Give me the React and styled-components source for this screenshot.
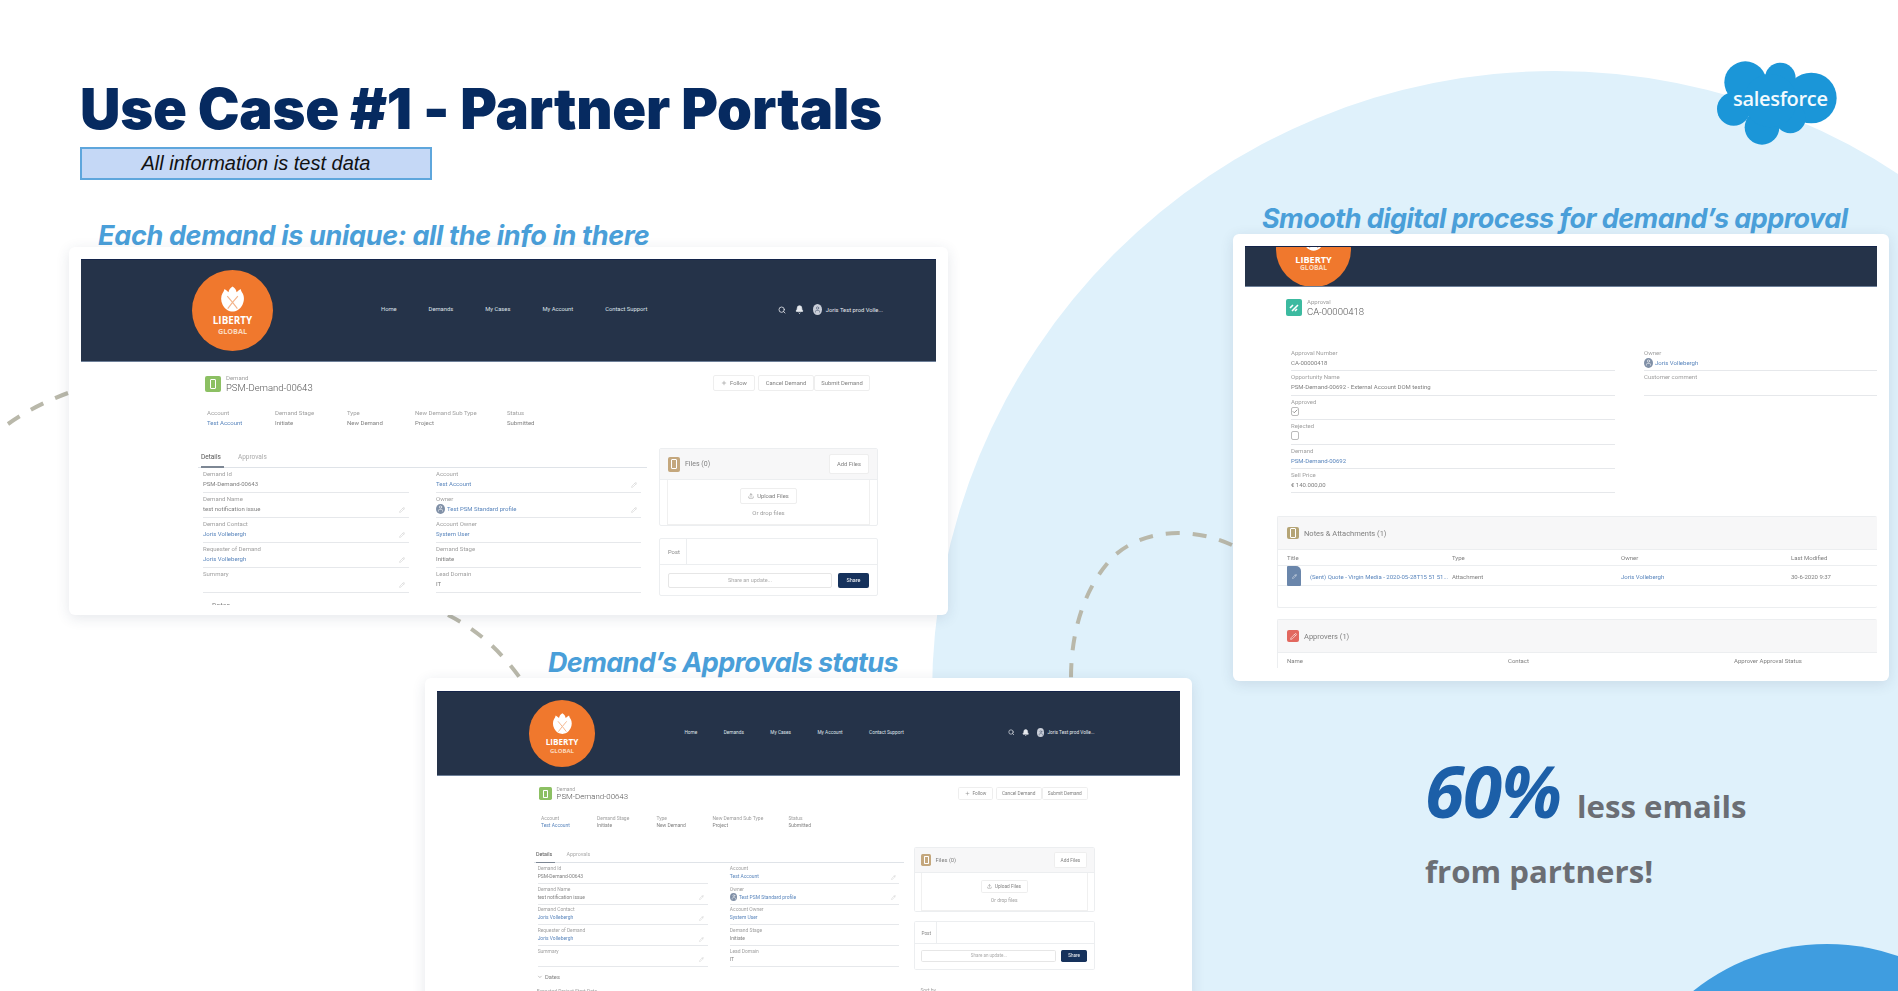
import React from 'react';
import styled, { createGlobalStyle } from 'styled-components';
import { Search, Bell, Plus, Upload, Pencil, Check, User, ChevronDown } from 'lucide-react';

const GlobalStyle = createGlobalStyle`
  html, body {
    margin: 0;
    padding: 0;
    background: #fff;
  }
  * {
    box-sizing: border-box;
  }
`;

const uiFont = `Roboto, "Liberation Sans", sans-serif`;

const Slide = styled.div`
  position: relative;
  display: flex;
  width: 1898px;
  height: 991px;
  overflow: hidden;
  background: #fff;
  font-family: ${uiFont};
  filter: blur(0.35px);
`;

const BigCircle = styled.div`
  position: absolute;
  left: 932px;
  top: 71px;
  width: 1246px;
  height: 1246px;
  border-radius: 50%;
  background: #dff1fb;
`;

const CornerCircle = styled.div`
  position: absolute;
  left: 1613px;
  top: 944px;
  width: 428px;
  height: 428px;
  border-radius: 50%;
  background: #3f9de0;
`;

const DashLayer = styled.svg`
  position: absolute;
  left: 0;
  top: 0;
`;

const LeftColumn = styled.div`
  position: relative;
  width: 1233px;
  flex: none;
  padding: 77px 0 0 69px;
`;

const RightColumn = styled.div`
  position: relative;
  flex: 1;
  padding-top: 61px;
`;

const Title = styled.h1`
  margin: 0 0 0 11px;
  font-family: Inter, sans-serif;
  font-size: 56px;
  font-weight: 900;
  line-height: 64px;
  letter-spacing: -0.2px;
  white-space: nowrap;
  color: #062a60;
`;

const TestBadge = styled.div`
  display: flex;
  align-items: center;
  justify-content: center;
  width: 352px;
  height: 33px;
  margin: 6px 0 0 11px;
  background: #c5d8f6;
  border: 2px solid #5ea6dc;
  font-family: "Liberation Sans", Arial, sans-serif;
  font-size: 20px;
  font-style: italic;
  color: #111;
`;

const Caption = styled.div`
  height: ${({ $height }) => $height}px;
  margin: ${({ $top }) => $top}px 0 0 ${({ $left }) => $left}px;
  font-family: Inter, sans-serif;
  font-size: 27px;
  font-style: italic;
  font-weight: 700;
  line-height: 30px;
  letter-spacing: ${({ $spacing }) => $spacing}px;
  white-space: nowrap;
  color: #4a9fd9;
`;

const ShotCard = styled.div`
  position: relative;
  width: ${({ $width }) => $width}px;
  height: ${({ $height }) => $height}px;
  margin-left: ${({ $left }) => $left || 0}px;
  padding: ${({ $top }) => $top || 12}px 12px 12px;
  background: #fff;
  border-radius: 6px;
  box-shadow: 0 3px 14px rgba(40, 60, 90, 0.12);
  filter: blur(0.3px);
`;

const ShotClip = styled.div`
  height: ${({ $height }) => $height}px;
  overflow: hidden;
`;

const Scaled = styled.div`
  zoom: ${({ $scale }) => $scale};
  width: ${({ $width }) => $width}px;
`;

const TopBar = styled.div`
  display: flex;
  align-items: center;
  height: ${({ $height }) => $height}px;
  padding: 0 ${({ $right }) => $right}px 0 ${({ $left }) => $left}px;
  background: #253349;
  border-top: 1px solid #14244a;
  border-bottom: 1px solid #6d7f98;
  overflow: hidden;
`;

const LogoDisc = styled.div`
  display: flex;
  flex: none;
  flex-direction: column;
  align-items: center;
  width: ${({ $size }) => $size}px;
  height: ${({ $size }) => $size}px;
  margin-top: ${({ $lift }) => $lift || 0}px;
  padding-top: ${({ $size }) => $size * 0.2}px;
  border-radius: 50%;
  background: #f0782d;
`;

const LogoMark = styled.svg`
  flex: none;
  width: ${({ $size }) => $size * 0.31}px;
  height: ${({ $size }) => $size * 0.32}px;
`;

const LogoWord = styled.span`
  margin-top: ${({ $top }) => $top}px;
  font-family: "Open Sans", sans-serif;
  font-size: ${({ $size }) => $size}px;
  font-weight: 700;
  line-height: 1;
  color: ${({ $soft }) => ($soft ? '#fbd9bf' : '#fff')};
`;

const TopNav = styled.nav`
  display: flex;
  gap: 32px;
  margin: 0 0 3px 108px;
`;

const TopNavItem = styled.span`
  font-size: 5.8px;
  color: #dfe3ea;
  white-space: nowrap;
`;

const TopUser = styled.div`
  display: flex;
  align-items: center;
  gap: 9px;
  margin: 0 0 2px auto;
  color: #e6e9ee;
`;

const TopAvatar = styled.span`
  display: flex;
  align-items: center;
  justify-content: center;
  width: 9px;
  height: 11px;
  border-radius: 50%;
  background: #c9ced8;
  color: #4b5a72;
`;

const TopName = styled.span`
  margin-left: -5px;
  font-size: 5.8px;
  white-space: nowrap;
`;

const Content = styled.div`
  width: ${124 + 673}px;
  padding-left: 117px;
`;

const RecordRow = styled.div`
  display: flex;
  align-items: flex-start;
  justify-content: space-between;
  padding: 13px 8px 0 7px;
`;

const RecordName = styled.div`
  display: flex;
  align-items: center;
  gap: 5px;
`;

const DemandName = styled(RecordName)`
  margin-top: -1px;
`;

const RecordIcon = styled.span`
  display: flex;
  align-items: center;
  justify-content: center;
  flex: none;
  width: ${({ $w }) => $w || 16}px;
  height: ${({ $h }) => $h || 16}px;
  border-radius: 2px;
  background: ${({ $color }) => $color};
  color: #fff;
`;

const IconCore = styled.span`
  width: 6px;
  height: 10px;
  border: 1px solid #fff;
  border-radius: 1px;
`;

const Tiny = styled.div`
  font-size: 6px;
  line-height: 8px;
  color: #a0a0a0;
  white-space: nowrap;
`;

const RecordTitle = styled.div`
  font-size: 9.5px;
  line-height: 11px;
  font-weight: 300;
  color: #555;
  white-space: nowrap;
`;

const ButtonGroup = styled.div`
  display: flex;
  gap: 3px;
`;

const JoinedButtons = styled.div`
  display: flex;
`;

const GhostButton = styled.span`
  display: flex;
  align-items: center;
  justify-content: center;
  gap: 3px;
  width: ${({ $width }) => $width}px;
  height: ${({ $height }) => $height || 16}px;
  background: #fff;
  border: 1px solid #eee;
  border-radius: 2px;
  font-size: 5.8px;
  color: #808080;
  white-space: nowrap;
`;

const Highlights = styled.div`
  display: grid;
  grid-template-columns: 68px 72px 68px 92px 60px;
  margin: 16px 0 0 9px;
`;

const HighlightValue = styled.div`
  margin-top: 1px;
  font-size: 6px;
  line-height: 9px;
  color: ${({ $link }) => ($link ? '#5a86bd' : '#808080')};
  white-space: nowrap;
`;

const MainArea = styled.div`
  display: flex;
  align-items: flex-start;
  gap: 12px;
  margin-top: 21px;
`;

const DetailColumn = styled.div`
  width: 449px;
  flex: none;
`;

const Tabs = styled.div`
  display: flex;
  gap: 14px;
  height: 20px;
  padding-left: 3px;
  border-bottom: 1px solid #dfe3e8;
`;

const Tab = styled.span`
  height: 20px;
  padding: 5px 3px 0 0;
  font-size: 6.5px;
  line-height: 8px;
  color: ${({ $active }) => ($active ? '#555' : '#aaa')};
  border-bottom: ${({ $active }) => ($active ? '2px solid #7d8794' : 'none')};
`;

const FieldGrid = styled.div`
  display: grid;
  grid-template-columns: ${({ $columns }) => $columns};
  column-gap: ${({ $gap }) => $gap}px;
  padding-left: ${({ $left }) => $left}px;
`;

const Field = styled.div`
  position: relative;
  height: ${({ $height }) => $height || 25}px;
  padding-top: 2px;
  border-bottom: 1px solid #e6e8eb;
`;

const FieldValue = styled.div`
  display: flex;
  align-items: center;
  gap: 2px;
  height: 11px;
  font-size: 6px;
  color: ${({ $link }) => ($link ? '#5a86bd' : '#808080')};
  white-space: nowrap;
`;

const EditMark = styled.span`
  position: absolute;
  right: 4px;
  bottom: 4px;
  display: flex;
  color: #c8c8c8;
`;

const OwnerAvatar = styled.span`
  display: flex;
  align-items: center;
  justify-content: center;
  width: 9px;
  height: 10px;
  border-radius: 50%;
  background: #7f8fa6;
  color: #fff;
`;

const TickBox = styled.span`
  display: flex;
  align-items: center;
  justify-content: center;
  width: 8px;
  height: 9px;
  border: 1px solid #bbb;
  border-radius: 2px;
  background: #fff;
  color: #777;
`;

const SideColumn = styled.div`
  display: flex;
  flex-direction: column;
  gap: 12px;
  width: 219px;
  flex: none;
`;

const PanelBox = styled.div`
  background: #fff;
  border: 1px solid #eceef0;
  border-radius: 2px;
`;

const PanelHead = styled.div`
  display: flex;
  align-items: center;
  gap: 5px;
  height: ${({ $height }) => $height}px;
  padding: 0 ${({ $pad }) => $pad}px;
  background: #f7f7f8;
  border-bottom: 1px solid #eceef0;
`;

const PanelTitle = styled.span`
  font-size: ${({ $size }) => $size}px;
  color: #808080;
  white-space: nowrap;
`;

const PushRight = styled.span`
  margin-left: auto;
`;

const DropZone = styled.div`
  display: flex;
  flex-direction: column;
  align-items: center;
  gap: 5px;
  height: 45px;
  margin: 0 7px;
  padding-top: 8px;
  border: 1px solid #f0f0f0;
  border-top: none;
`;

const PostRow = styled.div`
  display: flex;
  height: 26px;
  border-bottom: 1px solid #eceef0;
`;

const PostLabel = styled.span`
  width: 27px;
  padding: 10px 0 0 8px;
  font-size: 5.8px;
  color: #888;
  border-right: 1px solid #eceef0;
`;

const ShareRow = styled.div`
  display: flex;
  align-items: center;
  gap: 6px;
  height: 30px;
  padding: 0 8px;
`;

const ShareInput = styled.span`
  flex: 1;
  height: 15px;
  border: 1px solid #e6e6e6;
  border-radius: 2px;
  font-size: 5.5px;
  line-height: 13px;
  text-align: center;
  color: #aaa;
`;

const ShareButton = styled.span`
  width: 31px;
  height: 15px;
  background: #16325c;
  border-radius: 2px;
  font-size: 5.5px;
  line-height: 15px;
  text-align: center;
  color: #fff;
`;

const SectionLabel = styled.div`
  display: flex;
  align-items: center;
  gap: 3px;
  height: 12px;
  margin: 7px 0 0 4px;
  font-size: 7px;
  color: #808080;
`;

const FooterField = styled(Tiny)`
  margin: 7px 0 0 4px;
`;

const SortBy = styled(Tiny)`
  margin: 9px 0 0 8px;
`;

const ApprovalBody = styled.div`
  padding-left: 41px;
`;

const ApprovalHead = styled(RecordName)`
  padding-top: 11px;
`;

const ApprovalFields = styled(FieldGrid)`
  margin-top: 30px;
`;

const RelatedList = styled.div`
  margin: ${({ $top }) => $top}px 0 0 32px;
  border: 1px solid #eceef0;
  border-right: none;
  border-radius: 2px;
  height: ${({ $height }) => $height}px;
`;

const ListTable = styled.div`
  display: grid;
  grid-template-columns: ${({ $columns }) => $columns};
  align-items: center;
  height: ${({ $height }) => $height}px;
  padding-left: 9px;
  border-bottom: 1px solid ${({ $flat }) => ($flat ? 'transparent' : '#eceef0')};
  font-size: 6px;
  color: #808080;
  white-space: nowrap;
`;

const LinkText = styled.span`
  color: #5a86bd;
`;

const FileCell = styled.span`
  display: flex;
  align-items: center;
  gap: 9px;
`;

const FileIcon = styled.span`
  display: flex;
  align-items: center;
  justify-content: center;
  width: 14px;
  height: 20px;
  border-radius: 1px 5px 1px 1px;
  background: #6a86ab;
  color: #fff;
`;

const LogoSlot = styled.div`
  position: relative;
  width: 120px;
  height: 84px;
  margin-left: 484px;
`;

const CloudShape = styled.svg`
  display: block;
  width: 120px;
  height: 84px;
`;

const CloudWord = styled.span`
  position: absolute;
  left: 16px;
  top: 24px;
  font-family: "Open Sans", sans-serif;
  font-size: 20px;
  font-weight: 600;
  line-height: 28px;
  letter-spacing: -0.3px;
  color: #f2fafe;
`;

const Callout = styled.div`
  margin: ${({ $top }) => $top}px 0 0 192px;
  font-family: "Open Sans", sans-serif;
  font-weight: 700;
  color: #6b6e74;
  white-space: nowrap;
`;

const CalloutLine = styled.div`
  display: flex;
  align-items: baseline;
  gap: 16px;
  height: ${({ $height }) => $height}px;
  font-size: 31.2px;
  line-height: ${({ $height }) => $height}px;
`;

const CalloutFigure = styled.span`
  font-size: 71px;
  font-style: italic;
  color: #1c5fa8;
  letter-spacing: -1px;
`;

const navItems = ['Home', 'Demands', 'My Cases', 'My Account', 'Contact Support'];

const highlights = [
  { label: 'Account', value: 'Test Account', link: true },
  { label: 'Demand Stage', value: 'Initiate' },
  { label: 'Type', value: 'New Demand' },
  { label: 'New Demand Sub Type', value: 'Project' },
  { label: 'Status', value: 'Submitted' },
];

const demandFields = [
  { label: 'Demand Id', value: 'PSM-Demand-00643', locked: true },
  { label: 'Account', value: 'Test Account', link: true },
  { label: 'Demand Name', value: 'test notification issue' },
  { label: 'Owner', value: 'Test PSM Standard profile', link: true, owner: true },
  { label: 'Demand Contact', value: 'Joris Vollebergh', link: true },
  { label: 'Account Owner', value: 'System User', link: true, locked: true },
  { label: 'Requester of Demand', value: 'Joris Vollebergh', link: true },
  { label: 'Demand Stage', value: 'Initiate', locked: true },
  { label: 'Summary', value: '' },
  { label: 'Lead Domain', value: 'IT', locked: true },
];

const LibertyLogo = ({ size, lift }) => (
  <LogoDisc $size={size} $lift={lift}>
    <LogoMark $size={size} viewBox="0 0 26 26">
      <path
        fill="#fff"
        d="M13 0C10.5 1.5 9.2 3.6 8.8 6 7.6 4.6 6.2 3.4 4.6 2.6 4.2 4.4 3.6 5.6 2.6 7.2 0.8 10.4 0.6 15 2.8 19.2 5.2 24 9.6 26 13 26s7.8-2 10.2-6.8c2.2-4.2 2-8.8.2-12-1-1.6-1.6-2.8-2-4.6-1.6.8-3 2-4.2 3.4C16.8 3.6 15.5 1.5 13 0Z"
      />
      <path fill="none" stroke="#f3b48c" strokeWidth="1.2" d="M7.5 10l5.5 6.5L18.5 10M13 16.5L8 23M13 16.5L18 23" />
    </LogoMark>
    <LogoWord $size={size * 0.122} $top={size * 0.05}>LIBERTY</LogoWord>
    <LogoWord $size={size * 0.09} $top={size * 0.02} $soft>GLOBAL</LogoWord>
  </LogoDisc>
);

const PortalBar = ({ right }) => (
  <TopBar $height={103} $left={111} $right={right}>
    <LibertyLogo size={81} />
    <TopNav>
      {navItems.map((item) => (
        <TopNavItem key={item}>{item}</TopNavItem>
      ))}
    </TopNav>
    <TopUser>
      <Search size={8} strokeWidth={2.4} />
      <Bell size={9} fill="currentColor" />
      <TopAvatar><User size={7} /></TopAvatar>
      <TopName>Joris Test prod Volle...</TopName>
    </TopUser>
  </TopBar>
);

const DetailField = ({ field }) => (
  <Field>
    <Tiny>{field.label}</Tiny>
    <FieldValue $link={field.link}>
      {field.owner && <OwnerAvatar><User size={7} /></OwnerAvatar>}
      {field.value}
    </FieldValue>
    {!field.locked && <EditMark><Pencil size={6} /></EditMark>}
  </Field>
);

const DemandPage = ({ right }) => (
  <>
    <PortalBar right={right} />
    <Content>
      <RecordRow>
        <DemandName>
          <RecordIcon $color="#8cc063"><IconCore /></RecordIcon>
          <div>
            <Tiny>Demand</Tiny>
            <RecordTitle>PSM-Demand-00643</RecordTitle>
          </div>
        </DemandName>
        <ButtonGroup>
          <GhostButton $width={42}><Plus size={6} />Follow</GhostButton>
          <JoinedButtons>
            <GhostButton $width={56}>Cancel Demand</GhostButton>
            <GhostButton $width={56}>Submit Demand</GhostButton>
          </JoinedButtons>
        </ButtonGroup>
      </RecordRow>
      <Highlights>
        {highlights.map((item) => (
          <div key={item.label}>
            <Tiny>{item.label}</Tiny>
            <HighlightValue $link={item.link}>{item.value}</HighlightValue>
          </div>
        ))}
      </Highlights>
      <MainArea>
        <DetailColumn>
          <Tabs>
            <Tab $active>Details</Tab>
            <Tab>Approvals</Tab>
          </Tabs>
          <FieldGrid $columns="206px 205px" $gap={27} $left={5}>
            {demandFields.map((field) => (
              <DetailField key={field.label} field={field} />
            ))}
          </FieldGrid>
          <SectionLabel><ChevronDown size={7} />Dates</SectionLabel>
          <FooterField>Expected Project Start Date</FooterField>
        </DetailColumn>
        <SideColumn>
          <PanelBox>
            <PanelHead $height={31} $pad={8}>
              <RecordIcon $color="#c4a77d" $w={12} $h={15}><IconCore /></RecordIcon>
              <PanelTitle $size={7}>Files (0)</PanelTitle>
              <PushRight>
                <GhostButton $width={40} $height={20}>Add Files</GhostButton>
              </PushRight>
            </PanelHead>
            <DropZone>
              <GhostButton $width={57}><Upload size={6} />Upload Files</GhostButton>
              <Tiny>Or drop files</Tiny>
            </DropZone>
          </PanelBox>
          <PanelBox>
            <PostRow><PostLabel>Post</PostLabel></PostRow>
            <ShareRow>
              <ShareInput>Share an update...</ShareInput>
              <ShareButton>Share</ShareButton>
            </ShareRow>
          </PanelBox>
          <SortBy>Sort by</SortBy>
        </SideColumn>
      </MainArea>
    </Content>
  </>
);

const ApprovalPage = () => (
  <>
    <TopBar $height={41} $left={31} $right={0}>
      <LibertyLogo size={75} lift={-34} />
    </TopBar>
    <ApprovalBody>
      <ApprovalHead>
        <RecordIcon $color="#3cbaa0" $h={17}>
          <svg width="10" height="10" viewBox="0 0 10 10" fill="none" stroke="#fff" strokeWidth="1.6">
            <path d="M1 5l3-3M3 8l6-6M6 8l2-2" />
          </svg>
        </RecordIcon>
        <div>
          <Tiny>Approval</Tiny>
          <RecordTitle>CA-00000418</RecordTitle>
        </div>
      </ApprovalHead>
      <ApprovalFields $columns="324px 234px" $gap={29} $left={5}>
        <div>
          <Field $height={24.4}>
            <Tiny>Approval Number</Tiny>
            <FieldValue>CA-00000418</FieldValue>
          </Field>
          <Field $height={24.4}>
            <Tiny>Opportunity Name</Tiny>
            <FieldValue>PSM-Demand-00692 - External Account DOM testing</FieldValue>
          </Field>
          <Field $height={24.4}>
            <Tiny>Approved</Tiny>
            <FieldValue><TickBox><Check size={7} strokeWidth={3} /></TickBox></FieldValue>
          </Field>
          <Field $height={24.4}>
            <Tiny>Rejected</Tiny>
            <FieldValue><TickBox /></FieldValue>
          </Field>
          <Field $height={24.4}>
            <Tiny>Demand</Tiny>
            <FieldValue $link>PSM-Demand-00692</FieldValue>
          </Field>
          <Field $height={24.4}>
            <Tiny>Sell Price</Tiny>
            <FieldValue>€ 140.000,00</FieldValue>
          </Field>
        </div>
        <div>
          <Field $height={24.4}>
            <Tiny>Owner</Tiny>
            <FieldValue $link><OwnerAvatar><User size={7} /></OwnerAvatar>Joris Vollebergh</FieldValue>
          </Field>
          <Field $height={24.4}>
            <Tiny>Customer comment</Tiny>
          </Field>
        </div>
      </ApprovalFields>
    </ApprovalBody>
    <RelatedList $top={23} $height={92}>
      <PanelHead $height={33} $pad={9}>
        <RecordIcon $color="#b5a475" $w={12} $h={12}><IconCore /></RecordIcon>
        <PanelTitle $size={7.5}>Notes &amp; Attachments (1)</PanelTitle>
      </PanelHead>
      <ListTable $columns="165px 169px 170px 1fr" $height={16}>
        <span>Title</span>
        <span>Type</span>
        <span>Owner</span>
        <span>Last Modified</span>
      </ListTable>
      <ListTable $columns="165px 169px 170px 1fr" $height={20}>
        <FileCell>
          <FileIcon><Pencil size={5} /></FileIcon>
          <LinkText>(Sent) Quote - Virgin Media - 2020-05-28T15 51 51...</LinkText>
        </FileCell>
        <span>Attachment</span>
        <LinkText>Joris Vollebergh</LinkText>
        <span>30-6-2020 9:37</span>
      </ListTable>
    </RelatedList>
    <RelatedList $top={11} $height={60}>
      <PanelHead $height={33} $pad={9}>
        <RecordIcon $color="#e2685f" $w={12} $h={12}><Pencil size={7} /></RecordIcon>
        <PanelTitle $size={7.5}>Approvers (1)</PanelTitle>
      </PanelHead>
      <ListTable $columns="221px 226px 1fr" $height={16} $flat>
        <span>Name</span>
        <span>Contact</span>
        <span>Approver Approval Status</span>
      </ListTable>
    </RelatedList>
  </>
);

export default function App() {
  return (
    <>
      <GlobalStyle />
      <Slide>
        <BigCircle />
        <CornerCircle />
        <DashLayer width="1898" height="991" fill="none" stroke="#b9b8aa" strokeWidth="4" strokeDasharray="14 13">
          <path d="M8 424Q35 405 68 393" />
          <path d="M448 615Q490 636 520 678" />
          <path d="M1232 545C1200 530 1150 525 1115 555 1085 585 1071 630 1071 678" />
        </DashLayer>
        <LeftColumn>
          <Title>Use Case #1 - Partner Portals</Title>
          <TestBadge>All information is test data</TestBadge>
          <Caption $top={41} $left={29} $height={26} $spacing={-0.35}>Each demand is unique: all the info in there</Caption>
          <ShotCard $width={879} $height={368}>
            <ShotClip $height={346}>
              <DemandPage right={53} />
            </ShotClip>
          </ShotCard>
          <Caption $top={33} $left={479} $height={30} $spacing={-0.64}>Demand’s Approvals status</Caption>
          <ShotCard $width={767} $height={330} $left={356} $top={13}>
            <ShotClip $height={400}>
              <Scaled $scale={0.825} $width={900}>
                <DemandPage right={103} />
              </Scaled>
            </ShotClip>
          </ShotCard>
        </LeftColumn>
        <RightColumn>
          <LogoSlot>
            <CloudShape viewBox="110 62 360 250">
              <g fill="#1b96d8">
                <circle cx="195" cy="125" r="63" />
                <circle cx="300" cy="112" r="46" />
                <circle cx="393" cy="172" r="76" />
                <circle cx="160" cy="205" r="50" />
                <circle cx="245" cy="260" r="52" />
                <circle cx="330" cy="232" r="46" />
                <circle cx="270" cy="180" r="80" />
              </g>
            </CloudShape>
            <CloudWord>salesforce</CloudWord>
          </LogoSlot>
          <Caption $top={59} $left={29} $height={30} $spacing={-0.55}>Smooth digital process for demand’s approval</Caption>
          <ShotCard $width={656} $height={447}>
            <ShotClip $height={422}>
              <ApprovalPage />
            </ShotClip>
          </ShotCard>
          <Callout $top={73}>
            <CalloutLine $height={74}>
              <CalloutFigure>60%</CalloutFigure>
              <span>less emails</span>
            </CalloutLine>
            <CalloutLine $height={86}>from partners!</CalloutLine>
          </Callout>
        </RightColumn>
      </Slide>
    </>
  );
}
